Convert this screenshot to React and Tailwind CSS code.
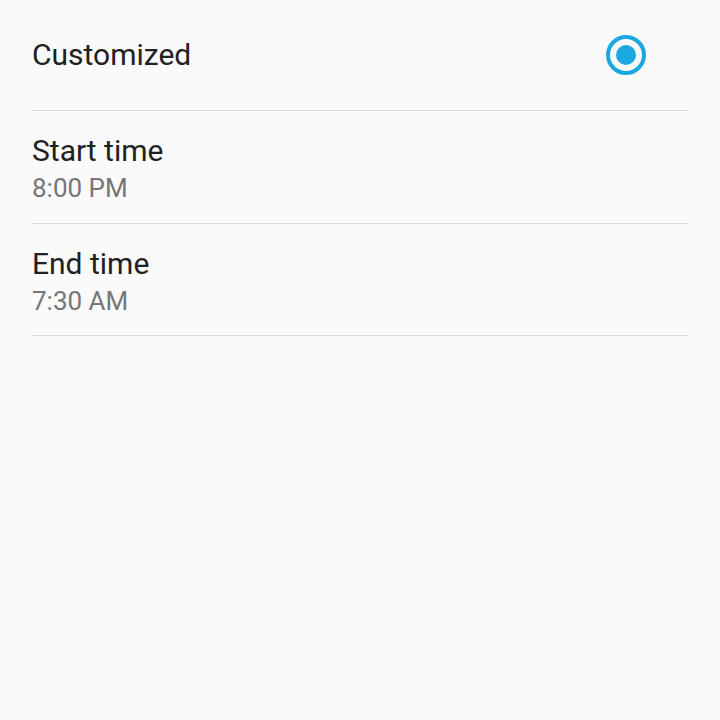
import React from 'react';

const TimeRow = ({ title, value }) => (
  <div className="flex h-[112.5px] flex-col justify-center border-b border-[#d9d9d9] pt-[4px]">
    <div className="text-[30px] leading-[36px] text-[#212121]">{title}</div>
    <div className="mt-[3px] text-[26px] leading-[32px] text-[#767676]">{value}</div>
  </div>
);

export default function App() {
  return (
    <div className="min-h-[720px] w-full bg-[#fafafa] px-8 font-['Roboto',sans-serif]">
      {/* Customized option */}
      <div className="flex h-[111px] items-center justify-between border-b border-[#d9d9d9]">
        <span className="text-[30px] leading-[36px] text-[#212121]">Customized</span>
        <div className="mr-[42px] flex h-10 w-10 items-center justify-center rounded-full border-4 border-[#1ba8e1]">
          <div className="h-5 w-5 rounded-full bg-[#1ba8e1]" />
        </div>
      </div>

      <TimeRow title="Start time" value="8:00 PM" />
      <TimeRow title="End time" value="7:30 AM" />
    </div>
  );
}
